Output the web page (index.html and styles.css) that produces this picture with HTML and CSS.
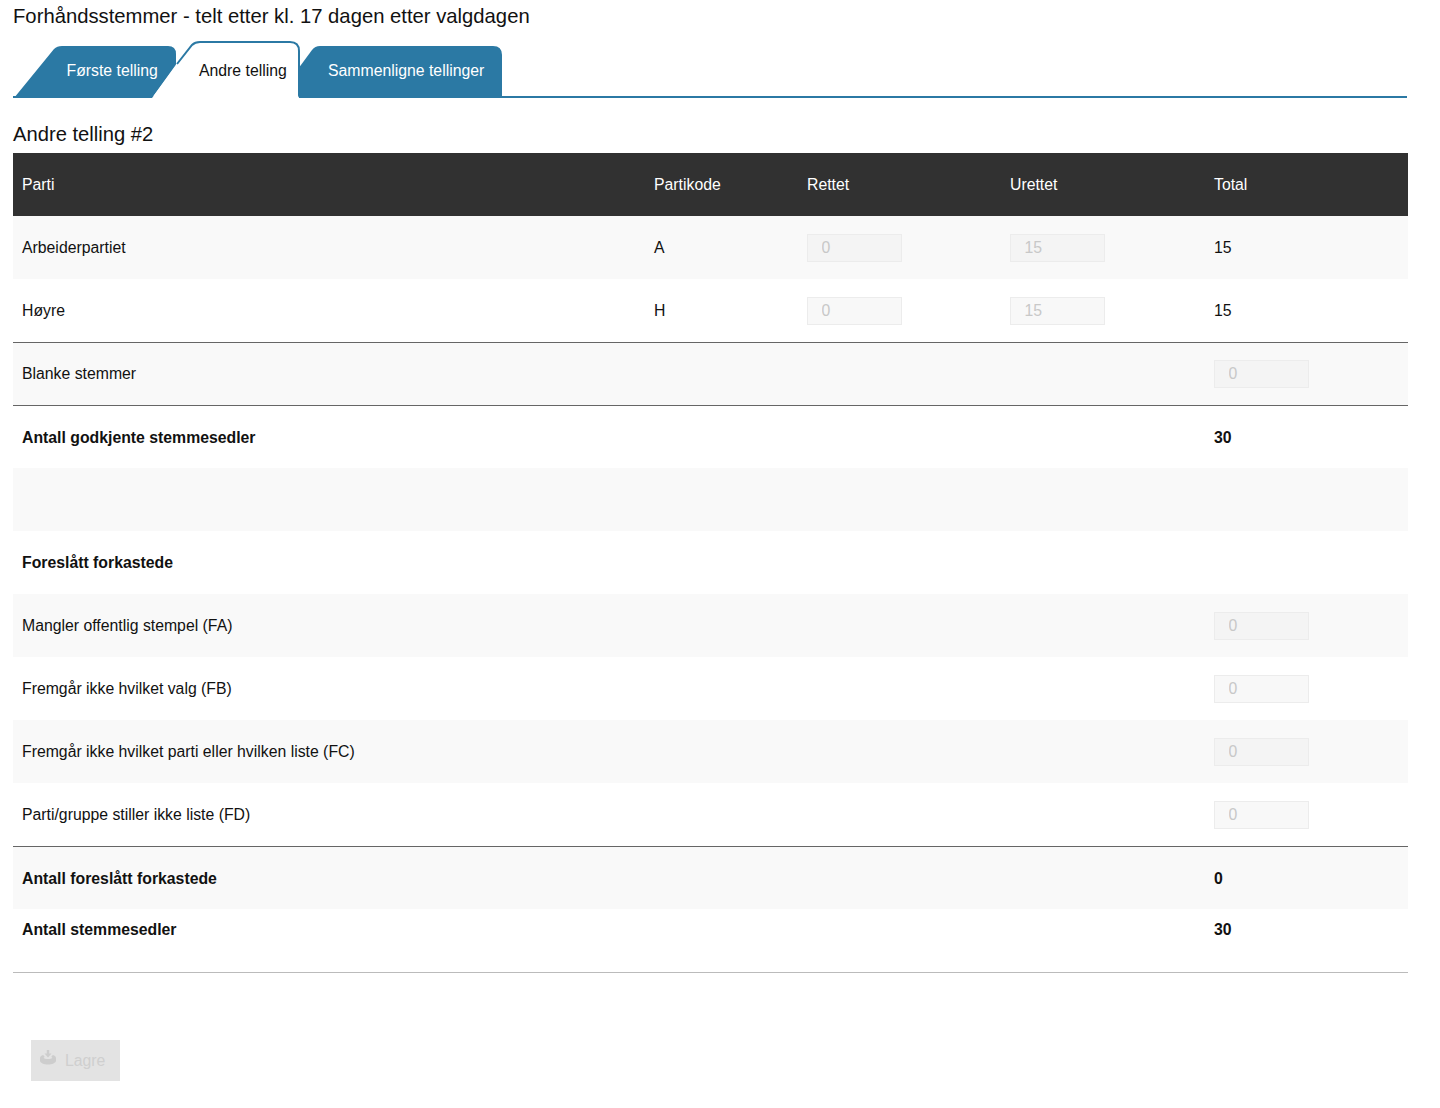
FILE: index.html
```html
<!DOCTYPE html>
<html lang="no">
<head>
<meta charset="utf-8">
<title>Andre telling</title>
<link rel="stylesheet" href="styles.css">
</head>
<body>
<main class="page">
  <h1 class="title">Forhåndsstemmer - telt etter kl. 17 dagen etter valgdagen</h1>
  <nav class="tabs">
    <a class="tab tab-first">
      <svg class="tab-bg" width="165" height="52" viewBox="0 0 165 52"><path class="fill" d="M1 52 L41 3 Q44 0 49 0 L155 0 Q163 0 163 8 L163 18 Q163 19 162 20 L139 52 Z"/></svg>
      <span class="tab-label">Første telling</span>
    </a>
    <a class="tab tab-active">
      <svg class="tab-bg" width="128" height="57" viewBox="0 0 128 57"><path class="cover" d="M-20 57 L5 23 L20 4 Q23 1 28 1 L118 1 Q127 1 127 10 L127 57 Z"/><path class="line" d="M5 23 L20 4 Q23 1 28 1 L118 1 Q127 1 127 10 L127 32"/></svg>
      <span class="tab-label">Andre telling</span>
    </a>
    <a class="tab tab-last">
      <svg class="tab-bg" width="205" height="52" viewBox="0 0 205 52"><path class="fill" d="M3 52 Q0 52 0 49 L0 23 L14 4 Q17 0 22 0 L195 0 Q204 0 204 9 L204 52 Z"/></svg>
      <span class="tab-label">Sammenligne tellinger</span>
    </a>
  </nav>
  <h2 class="subtitle">Andre telling #2</h2>
  <table class="counts">
    <colgroup>
      <col class="c-parti"><col class="c-kode"><col class="c-ret"><col class="c-uret"><col class="c-total">
    </colgroup>
    <thead>
      <tr><th>Parti</th><th>Partikode</th><th>Rettet</th><th>Urettet</th><th>Total</th></tr>
    </thead>
    <tbody>
      <tr class="alt"><td>Arbeiderpartiet</td><td>A</td><td><input class="num" disabled value="0"></td><td><input class="num" disabled value="15"></td><td>15</td></tr>
      <tr class="rule nudge"><td>Høyre</td><td>H</td><td><input class="num" disabled value="0"></td><td><input class="num" disabled value="15"></td><td>15</td></tr>
      <tr class="alt rule"><td colspan="4">Blanke stemmer</td><td><input class="num" disabled value="0"></td></tr>
      <tr class="strong nudge"><td colspan="4">Antall godkjente stemmesedler</td><td>30</td></tr>
      <tr class="alt"><td colspan="5"></td></tr>
      <tr class="strong"><td colspan="5">Foreslått forkastede</td></tr>
      <tr class="alt"><td colspan="4">Mangler offentlig stempel (FA)</td><td><input class="num" disabled value="0"></td></tr>
      <tr><td colspan="4">Fremgår ikke hvilket valg (FB)</td><td><input class="num" disabled value="0"></td></tr>
      <tr class="alt"><td colspan="4">Fremgår ikke hvilket parti eller hvilken liste (FC)</td><td><input class="num" disabled value="0"></td></tr>
      <tr class="rule nudge"><td colspan="4">Parti/gruppe stiller ikke liste (FD)</td><td><input class="num" disabled value="0"></td></tr>
      <tr class="alt strong nudge"><td colspan="4">Antall foreslått forkastede</td><td>0</td></tr>
      <tr class="strong top rule-light"><td colspan="4">Antall stemmesedler</td><td>30</td></tr>
    </tbody>
  </table>
  <button class="save" disabled>
    <svg class="save-icon" width="16" height="15" viewBox="0 0 16 15"><path d="M6.8 0 H9.2 V3.5 H11.5 L8 7.5 L4.5 3.5 H6.8 Z"/><path d="M3.2 5 L4.8 7 C2.8 7.6 3.6 9 8 9 C12.4 9 13.2 7.6 11.2 7 L12.8 5 C14.8 5.6 16 6.6 16 8 V10.5 C16 13 12 14.5 8 14.5 C4 14.5 0 13 0 10.5 V8 C0 6.6 1.2 5.6 3.2 5 Z"/></svg>
    <span class="save-label">Lagre</span>
  </button>
</main>
</body>
</html>
```
FILE: styles.css
```css
* { box-sizing: border-box; }
html, body { margin: 0; padding: 0; background: #fff; }
body { font-family: "Liberation Sans", Arial, sans-serif; color: #000; }
.page { padding: 4px 31px 0 13px; }
.title { margin: 0; font-size: 20.25px; font-weight: 400; line-height: 25px; color: #111; }
.tabs { display: flex; height: 69px; padding-top: 13px; align-items: flex-end; border-bottom: 2px solid #2b79a4; width: 1394px; }
.tab { position: relative; display: block; height: 52px; font-size: 15.8px; line-height: 49px; color: #fff; margin-bottom: -2px; }
.tab-bg { position: absolute; left: 0; bottom: 0; display: block; overflow: visible; }
.tab-label { position: relative; display: block; white-space: nowrap; }
.fill { fill: #2b79a4; }
.cover { fill: #fff; }
.line { fill: none; stroke: #2b79a4; stroke-width: 2; }
.tab-first { width: 165px; padding-left: 53.5px; }
.tab-active { width: 128px; height: 57px; margin-left: -6px; padding-left: 27px; color: #111; line-height: 60px; z-index: 1; }
.tab-last { width: 205px; margin-left: -2px; padding-left: 30px; z-index: 2; }
.subtitle { margin: 0; padding-top: 24px; font-size: 20.2px; font-weight: 400; line-height: 25px; height: 55px; color: #111; }
.counts { width: 1395px; table-layout: fixed; border-collapse: collapse; font-size: 15.8px; color: #111; }
.c-parti { width: 632px; }
.c-kode { width: 153px; }
.c-ret { width: 203px; }
.c-uret { width: 204px; }
.c-total { width: 203px; }
.counts th { height: 63px; padding: 0 9px; background: #313131; color: #fff; font-weight: 400; text-align: left; }
.counts td { height: 63px; padding: 0 9px; }
.alt td { background: #f9f9f9; }
.rule td { border-bottom: 1px solid #666; }
.rule-light td { border-bottom: 1px solid #bbb; }
.strong td { font-weight: 700; }
.nudge td { padding-top: 2px; }
.top td { vertical-align: top; padding-top: 12px; }
.num { display: block; width: 95px; height: 28px; padding: 0 13.5px; border: 1px solid #ececec; background: #f4f4f4; color: #c8c8c8; font: 15.8px "Liberation Sans", Arial, sans-serif; }
tr:not(.alt) .num { background: #f8f8f8; }
.save { display: flex; align-items: center; gap: 9px; width: 89px; height: 41px; margin: 67px 0 0 18px; padding: 0 0 0 9px; border: 0; background: #e3e3e3; color: #cfcfcf; font: 15.8px "Liberation Sans", Arial, sans-serif; }
.save-icon { fill: #cdcdcd; margin-top: -5px; }
.save-label { padding-top: 2px; }
```
